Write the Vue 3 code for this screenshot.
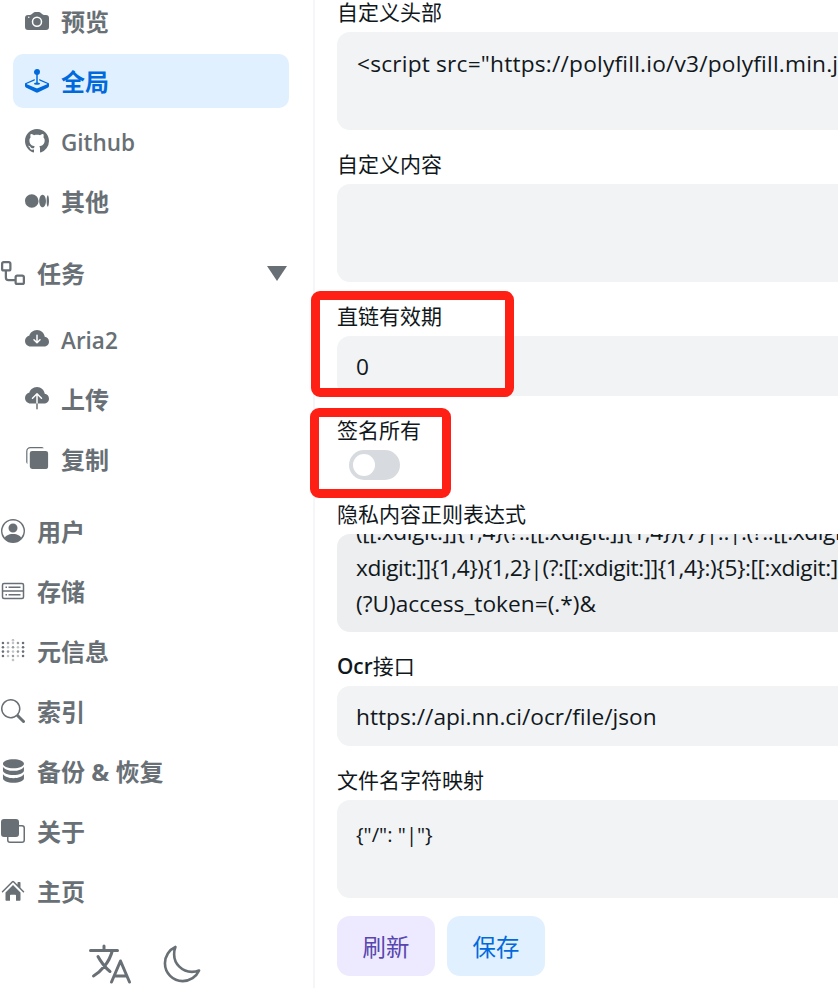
<script setup>
const GH = 'M8 0C3.58 0 0 3.58 0 8c0 3.54 2.29 6.53 5.47 7.59.4.07.55-.17.55-.38 0-.19-.01-.82-.01-1.49-2.01.37-2.53-.49-2.69-.94-.09-.23-.48-.94-.82-1.13-.28-.15-.68-.52-.01-.53.63-.01 1.08.58 1.23.82.72 1.21 1.87.87 2.33.66.07-.52.28-.87.51-1.07-1.78-.2-3.64-.89-3.64-3.95 0-.87.31-1.59.82-2.15-.08-.2-.36-1.02.08-2.12 0 0 .67-.21 2.2.82.64-.18 1.32-.27 2-.27.68 0 1.36.09 2 .27 1.53-1.04 2.2-.82 2.2-.82.44 1.1.16 1.92.08 2.12.51.56.82 1.27.82 2.15 0 3.07-1.87 3.75-3.65 3.95.29.25.54.73.54 1.48 0 1.07-.01 1.93-.01 2.2 0 .21.15.46.55.38A8.012 8.012 0 0 0 16 8c0-4.42-3.58-8-8-8z'

const subTop = [
  { t: '预览', d: 'M10.5 8.5a2.5 2.5 0 1 1-5 0 2.5 2.5 0 0 1 5 0zM2 4a2 2 0 0 0-2 2v6a2 2 0 0 0 2 2h12a2 2 0 0 0 2-2V6a2 2 0 0 0-2-2h-1.172a2 2 0 0 1-1.414-.586l-.828-.828A2 2 0 0 0 9.172 2H6.828a2 2 0 0 0-1.414.586l-.828.828A2 2 0 0 1 3.172 4H2zm.5 2a.5.5 0 1 1 0-1 .5.5 0 0 1 0 1zm9 2.5a3.5 3.5 0 1 1-7 0 3.5 3.5 0 0 1 7 0z' },
  { t: '全局', active: true, d: 'M10 2a2 2 0 0 1-1.5 1.937v5.087c.863.083 1.5.377 1.5.726 0 .414-.895.75-2 .75s-2-.336-2-.75c0-.35.637-.643 1.5-.726V3.937A2 2 0 1 1 10 2zM0 9.665v1.717a1 1 0 0 0 .553.894l6.553 3.277a2 2 0 0 0 1.788 0l6.553-3.277a1 1 0 0 0 .553-.894V9.665c0-.1-.06-.19-.152-.23L9.5 6.715v.993l5.227 2.178a.125.125 0 0 1 .001.23l-5.94 2.546a2 2 0 0 1-1.576 0l-5.94-2.546a.125.125 0 0 1 .001-.23L6.5 7.708l-.013-.988L.152 9.435a.25.25 0 0 0-.152.23z' },
  { t: 'Github', latin: true, d: GH },
  { t: '其他', d: 'M9.025 8c0 2.485-2.02 4.5-4.513 4.5A4.506 4.506 0 0 1 0 8c0-2.486 2.02-4.5 4.512-4.5A4.506 4.506 0 0 1 9.025 8zm4.95 0c0 2.34-1.01 4.236-2.256 4.236-1.246 0-2.256-1.897-2.256-4.236 0-2.34 1.01-4.236 2.256-4.236 1.246 0 2.256 1.897 2.256 4.236zM16 8c0 2.096-.355 3.795-.794 3.795-.438 0-.793-1.7-.793-3.795 0-2.096.355-3.795.794-3.795.438 0 .793 1.699.793 3.795z' },
]
const subTask = [
  { t: 'Aria2', latin: true, d: 'M8 2a5.53 5.53 0 0 0-3.594 1.342c-.766.66-1.321 1.52-1.464 2.383C1.266 6.095 0 7.555 0 9.318 0 11.366 1.708 13 3.781 13h8.906C14.502 13 16 11.57 16 9.773c0-1.636-1.242-2.969-2.834-3.194C12.923 3.999 10.69 2 8 2zm2.354 6.854-2 2a.5.5 0 0 1-.708 0l-2-2a.5.5 0 1 1 .708-.708L7.5 9.293V5.5a.5.5 0 0 1 1 0v3.793l1.146-1.147a.5.5 0 0 1 .708.708z' },
  { t: '上传', d: 'M8 0a5.53 5.53 0 0 0-3.594 1.342c-.766.66-1.321 1.52-1.464 2.383C1.266 4.095 0 5.555 0 7.318 0 9.366 1.708 11 3.781 11H7.5V5.707L5.354 7.854a.5.5 0 1 1-.708-.708l3-3a.5.5 0 0 1 .708 0l3 3a.5.5 0 0 1-.708.708L8.5 5.707V11h4.188C14.502 11 16 9.57 16 7.773c0-1.636-1.242-2.969-2.834-3.194C12.923 1.999 10.69 0 8 0zm-.5 14.5V11h1v3.5a.5.5 0 0 1-1 0z' },
  { t: '复制', d: 'M3.6 0h7.4a2 2 0 0 1 1.6.8H3.6A2 2 0 0 0 1.600 2.800V11.400a2 2 0 0 1-.8-1.600V2.800A2.800 2.800 0 0 1 3.600 0zM4.800 2.600h9A1.600 1.600 0 0 1 15.400 4.200v9.200a1.200 1.200 0 0 1-1.200 1.200H4.800a1.600 1.600 0 0 1-1.600-1.600v-8.800a1.600 1.600 0 0 1 1.600-1.600z' },
]
const topAfter = [
  { t: '用户', d: 'M11 6a3 3 0 1 1-6 0 3 3 0 0 1 6 0zM0 8a8 8 0 1 1 16 0A8 8 0 0 1 0 8zm8-7a7 7 0 0 0-5.468 11.37C3.242 11.226 4.805 10 8 10s4.757 1.225 5.468 2.37A7 7 0 0 0 8 1z' },
  { t: '存储', d: 'M2 2.5h12A1.5 1.5 0 0 1 15.5 4v8a1.5 1.5 0 0 1-1.5 1.5H2A1.5 1.5 0 0 1 .5 12V4A1.5 1.5 0 0 1 2 2.5zm0 1a.5.5 0 0 0-.5.5v3.5h13V4a.5.5 0 0 0-.5-.5H2zm-.5 5V12a.5.5 0 0 0 .5.5h12a.5.5 0 0 0 .5-.5V8.500h-13zM3 5h1v1H3V5zm2 0h8v1H5V5zm-2 5h1v1H3v-1zm2 0h8v1H5v-1z' },
  { t: '元信息', dots: true },
  { t: '索引', d: 'M11.742 10.344a6.5 6.5 0 1 0-1.397 1.398h-.001c.03.04.062.078.098.115l3.85 3.85a1 1 0 0 0 1.415-1.414l-3.85-3.85a1.007 1.007 0 0 0-.115-.1zM12 6.5a5.5 5.5 0 1 1-11 0 5.5 5.5 0 0 1 11 0z' },
  { t: '备份 & 恢复', d: 'M8.300 .2c3.900 0 7 1.300 7 3s-3.100 3-7 3-7-1.300-7-3 3.100-3 7-3zM1.300 5.100c1 1.700 3.800 2.800 7 2.800s6-1.100 7-2.800v2.600c0 1.700-3.100 3-7 3s-7-1.300-7-3V5.100zM1.300 10c1 1.700 3.800 2.800 7 2.800s6-1.100 7-2.800v2.800c0 1.700-3.100 3-7 3s-7-1.300-7-3V10z' },
  { t: '关于', d: 'M0 2a2 2 0 0 1 2-2h8a2 2 0 0 1 2 2v2h2a2 2 0 0 1 2 2v8a2 2 0 0 1-2 2H6a2 2 0 0 1-2-2v-2H2a2 2 0 0 1-2-2V2zm5 10v2a1 1 0 0 0 1 1h8a1 1 0 0 0 1-1V6a1 1 0 0 0-1-1h-2v5a2 2 0 0 1-2 2H5z' },
  { t: '主页', d: 'M3 14V9l5-5 5 5v5a.5.5 0 0 1-.5.5H10V11a.5.5 0 0 0-.5-.5h-3a.5.5 0 0 0-.5.5v3.500H3.500A.5.5 0 0 1 3 14zM13 2.500V6l-2-2V2.500a.5.5 0 0 1 .5-.5h1a.5.5 0 0 1 .5.5zM7.293 1.500a1 1 0 0 1 1.414 0l6.647 6.646a.5.5 0 0 1-.708.708L8 2.207 1.354 8.854a.5.5 0 1 1-.708-.708L7.293 1.500z' },
]
const dotGrid = []
const cols = [1.3, 4.7, 8, 11.3, 14.7]
const rows = [2.7, 5.5, 8.4, 11.3]
rows.forEach((y, r) => {
  cols.forEach((x, c) => {
    dotGrid.push({ x, y, o: (c === 0 || c === 4) ? 1 : ((r + c) % 2 ? 0.7 : 0.4) })
  })
})
const workflow = 'M0 1.75C0 .784.784 0 1.75 0h3.5C6.216 0 7 .784 7 1.75v3.5A1.75 1.75 0 0 1 5.25 7H4v4a1 1 0 0 0 1 1h4v-1.25C9 9.784 9.784 9 10.75 9h3.5c.966 0 1.75.784 1.75 1.75v3.5A1.75 1.75 0 0 1 14.25 16h-3.5A1.75 1.75 0 0 1 9 14.25v-.75H5A2.5 2.5 0 0 1 2.5 11V7h-.75A1.75 1.75 0 0 1 0 5.25Zm1.75-.25a.25.25 0 0 0-.25.25v3.5c0 .138.112.25.25.25h3.5a.25.25 0 0 0 .25-.25v-3.5a.25.25 0 0 0-.25-.25Zm9 9a.25.25 0 0 0-.25.25v3.5c0 .138.112.25.25.25h3.5a.25.25 0 0 0 .25-.25v-3.5a.25.25 0 0 0-.25-.25Z'
</script>

<template>
  <div class="app">
    <aside class="sidebar">
      <nav class="nav">
        <div class="group sub">
          <a v-for="i in subTop" :key="i.t" class="item" :class="{ active: i.active }">
            <svg class="ico" viewBox="0 0 16 16"><path :d="i.d" /></svg>
            <span :class="{ latin: i.latin }">{{ i.t }}</span>
          </a>
        </div>
        <a class="item task">
          <svg class="ico" viewBox="0 0 16 16"><path :d="workflow" /></svg>
          <span>任务</span>
          <svg class="caret" viewBox="0 0 20 15"><polygon points="0,0 20,0 10,15" /></svg>
        </a>
        <div class="group sub tasks">
          <a v-for="i in subTask" :key="i.t" class="item">
            <svg class="ico" viewBox="0 0 16 16"><path :d="i.d" /></svg>
            <span :class="{ latin: i.latin }">{{ i.t }}</span>
          </a>
        </div>
        <div class="group top">
          <a v-for="i in topAfter" :key="i.t" class="item">
            <svg v-if="i.dots" class="ico" viewBox="0 0 16 16">
              <circle cx="8" cy=".8" r=".6" fill="none" stroke="#687076" stroke-width=".3" />
              <circle cx="8" cy="14" r=".6" fill="none" stroke="#687076" stroke-width=".3" />
              <circle v-for="(p, n) in dotGrid" :key="n" :cx="p.x" :cy="p.y" r=".85" :opacity="p.o" />
            </svg>
            <svg v-else class="ico" viewBox="0 0 16 16"><path :d="i.d" /></svg>
            <span>{{ i.t }}</span>
          </a>
        </div>
      </nav>
      <div class="tools">
        <svg class="tool lang" viewBox="0 0 512 512" fill="none" stroke="#687076" stroke-width="32" stroke-linecap="round" stroke-linejoin="round">
          <path d="M48 112h288M192 64v48M272 448l96-224 96 224M301.500 384h133M281.300 112S257 206 199 277 80 384 80 384M256 336s-35-27-72-75-56-85-56-85" />
        </svg>
        <svg class="tool moon" viewBox="0 0 512 512" fill="none" stroke="#687076" stroke-width="32" stroke-linecap="round" stroke-linejoin="round">
          <path d="M160 136c0-30.620 4.510-61.610 16-88C99.570 81.270 48 159.320 48 248c0 119.290 96.710 216 216 216 88.680 0 166.730-51.570 200-128-26.390 11.490-57.380 16-88 16-119.290 0-216-96.710-216-216z" />
        </svg>
      </div>
    </aside>

    <main class="main">
      <section class="field">
        <label>自定义头部</label>
        <div class="box tall"><span class="head-line">&lt;script src="https://polyfill.io/v3/polyfill.min.js"&gt;&lt;/script&gt;</span></div>
      </section>
      <section class="field">
        <label>自定义内容</label>
        <div class="box tall"></div>
      </section>
      <section class="field">
        <label>直链有效期</label>
        <div class="box single">0</div>
      </section>
      <section class="field">
        <label>签名所有</label>
        <div class="switch"><i class="knob"></i></div>
      </section>
      <section class="field">
        <label>隐私内容正则表达式</label>
        <div class="box tall scrolled">
          <div class="lines">
            <div class="tight">([[:xdigit:]]{1,4}(?::[[:xdigit:]]{1,4}){7}|::|:(?::[[:xdigit:]]{1,4}){1,6}|[[:</div>
            <div class="tight">xdigit:]]{1,4}){1,2}|(?:[[:xdigit:]]{1,4}:){5}:[[:xdigit:]]{1,4}</div>
            <div>(?U)access_token=(.*)&amp;</div>
          </div>
        </div>
      </section>
      <section class="field">
        <label><b>Ocr</b>接口</label>
        <div class="box single">https://api.nn.ci/ocr/file/json</div>
      </section>
      <section class="field">
        <label>文件名字符映射</label>
        <div class="box tall small">{"/": "|"}</div>
      </section>
      <div class="actions">
        <button class="btn violet">刷新</button>
        <button class="btn blue">保存</button>
      </div>
    </main>

    <div class="mark mark-a"></div>
    <div class="mark mark-b"></div>
  </div>
</template>

<style scoped>
.app {
  position: relative;
  display: flex;
  width: 838px;
  height: 988px;
  overflow: hidden;
  background: #fff;
  font-family: "Open Sans", "Noto Sans CJK SC", sans-serif;
  color: #11181c;
}
.sidebar {
  flex: none;
  box-sizing: border-box;
  width: 315px;
  border-right: 2px solid #f5f6f7;
  display: flex;
  flex-direction: column;
}
.nav {
  display: flex;
  flex-direction: column;
  margin-top: -6px;
}
.group {
  display: flex;
  flex-direction: column;
  gap: 6px;
}
.sub {
  padding-left: 13px;
  width: 276px;
}
.top {
  margin-top: 18px;
}
.tasks {
  margin-top: 12px;
}
.item {
  box-sizing: border-box;
  display: flex;
  align-items: center;
  height: 54px;
  border-radius: 10px;
  color: #687076;
  font-size: 24px;
  font-weight: 700;
  flex: none;
}
.sub .item {
  padding-left: 12px;
}
.top .item, .task {
  padding-left: 1px;
}
.task {
  margin-top: 18px;
}
.item span {
  margin-top: -2px;
}
.item span.latin {
  font-size: 22.500px;
  font-weight: 600;
  margin-top: 2px;
}
.item.active {
  background: #e1f0ff;
  color: #006adc;
}
.ico {
  flex: none;
  width: 24px;
  height: 24px;
  margin-right: 12px;
  fill: currentColor;
}
.caret {
  width: 20px;
  height: 15px;
  margin-left: 182px;
  fill: #687076;
}
.tools {
  display: flex;
  justify-content: center;
  align-items: center;
  gap: 27px;
  margin-top: 22px;
  padding-right: 25px;
}
.tool {
  flex: none;
}
.lang {
  width: 48px;
  height: 48px;
}
.moon {
  width: 42px;
  height: 42px;
}
.main {
  flex: none;
  width: 700px;
  padding-left: 22px;
  display: flex;
  flex-direction: column;
}
.field {
  display: flex;
  flex-direction: column;
  margin-bottom: 22px;
}
.field label {
  display: block;
  height: 24px;
  line-height: 24px;
  margin-bottom: 8px;
  font-size: 21px;
}
.field label b {
  font-size: 20.800px;
  font-weight: 600;
}
.box {
  box-sizing: border-box;
  width: 100%;
  border-radius: 13px;
  background: #f1f3f5;
  font-size: 22.700px;
  line-height: 36px;
  padding: 0 20px 0 19px;
  white-space: nowrap;
  overflow: hidden;
}
.tall {
  height: 98px;
  padding-top: 14px;
}
.single {
  height: 60px;
  padding-top: 13px;
}
.small {
  font-size: 20.300px;
  padding-top: 16px;
}
.head-line {
  margin-left: 1px;
  letter-spacing: .2px;
}
.scrolled {
  background: #eceef0;
  padding-top: 0;
}
.lines {
  margin-top: -20px;
}
.tight {
  letter-spacing: -.42px;
}
.switch {
  box-sizing: border-box;
  width: 51px;
  height: 30px;
  margin-left: 12px;
  padding: 4px;
  border-radius: 15px;
  background: #d7dbdf;
}
.knob {
  display: block;
  width: 22px;
  height: 22px;
  border-radius: 50%;
  background: #fff;
}
.actions {
  display: flex;
  gap: 12px;
  margin-top: -4px;
}
.btn {
  width: 98px;
  height: 60px;
  border: 0;
  border-radius: 13px;
  font-family: inherit;
  font-size: 23.400px;
}
.violet {
  background: #ede9fe;
  color: #5746af;
}
.blue {
  background: #e1f0ff;
  color: #006adc;
}
.mark {
  position: absolute;
  box-sizing: border-box;
  border: 9px solid #ff2015;
  border-radius: 9px;
  pointer-events: none;
}
.mark-a {
  left: 311px;
  top: 291px;
  width: 203px;
  height: 106px;
}
.mark-b {
  left: 310px;
  top: 408px;
  width: 141px;
  height: 90px;
}
</style>
